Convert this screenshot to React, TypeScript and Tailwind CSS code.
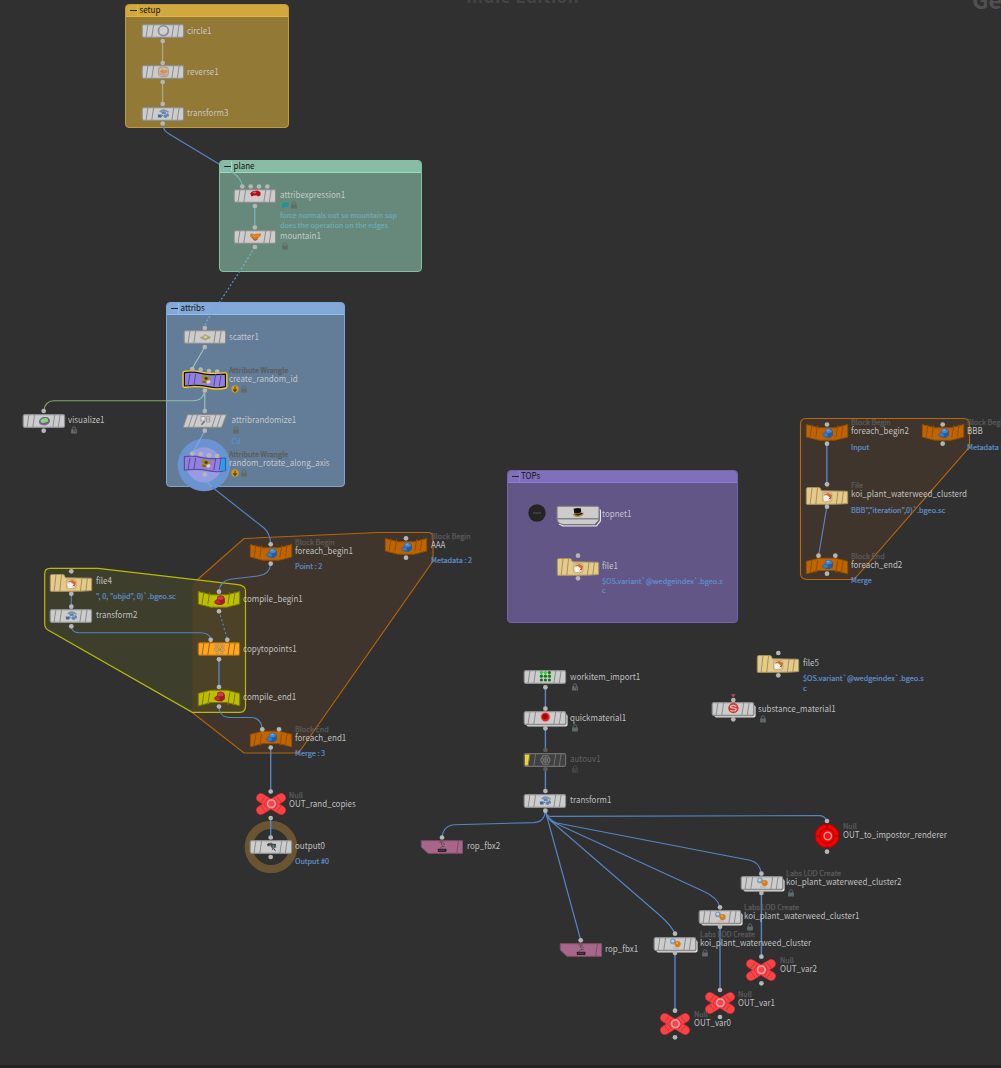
import React from "react";

type Pt = [number, number];
type Kind = "rect" | "wave" | "slant" | "folder" | "begin" | "end" | "null" | "rop" | "target" | "net";

interface NodeSpec {
  x: number;
  y: number;
  kind?: Kind;
  fill?: string;
  edge?: string;
  icon?: string;
  stacked?: boolean;
  selected?: boolean;
  flag?: "right" | "left";
  label: string;
  lx: number;
  ly?: number;
  type?: string;
  info?: string;
  infoDy?: number;
  badges?: string[];
  bx?: number;
  bdy?: number;
  dim?: boolean;
}

const GREY = "#cccccc";
const ORANGE = "#c06400";
const OLIVE = "#bcbe00";
const TAN = "#e5cb8b";
const PURPLE = "#9180dd";

const nodes: NodeSpec[] = [
  { x: 162.5, y: 31.3, icon: "circle", label: "circle1", lx: 187, ly: 31 },
  { x: 162.5, y: 72.3, icon: "reverse", label: "reverse1", lx: 187, ly: 72 },
  { x: 162.5, y: 113.5, icon: "xform", label: "transform3", lx: 187, ly: 113 },
  { x: 254.8, y: 196.2, icon: "expr", label: "attribexpression1", lx: 280, ly: 195, badges: ["chat", "lock"], bx: 285, bdy: 9 },
  { x: 254.8, y: 237.2, icon: "mountain", label: "mountain1", lx: 280, ly: 236, badges: ["lock"], bx: 285, bdy: 9 },
  { x: 204.6, y: 337.3, icon: "scatter", label: "scatter1", lx: 229, ly: 337 },
  { x: 204.6, y: 380.3, kind: "wave", fill: PURPLE, edge: "#10101c", selected: true, icon: "wrangle", label: "create_random_id", lx: 229, ly: 379, type: "Attribute Wrangle", badges: ["warn", "lock"], bx: 235, bdy: 9 },
  { x: 204.6, y: 420.5, kind: "slant", icon: "random", label: "attribrandomize1", lx: 231.5, ly: 420, badges: ["lock"], bx: 236, bdy: 9, info: "Cd", infoDy: 20.5 },
  { x: 204.6, y: 464.3, kind: "wave", fill: PURPLE, edge: "#5c4ba0", flag: "right", icon: "wrangle", label: "random_rotate_along_axis", lx: 229, ly: 463, type: "Attribute Wrangle", badges: ["warn", "lock"], bx: 235, bdy: 9 },
  { x: 43.5, y: 420.7, icon: "visualize", label: "visualize1", lx: 68, ly: 420, badges: ["key"], bx: 74, bdy: 9 },
  { x: 71, y: 582.6, kind: "folder", fill: TAN, icon: "file", label: "file4", lx: 96, ly: 581, info: '", 0, "objid", 0)`.bgeo.sc', infoDy: 15 },
  { x: 71, y: 616, icon: "xform", label: "transform2", lx: 96, ly: 615 },
  { x: 270.5, y: 551.8, kind: "begin", fill: ORANGE, icon: "blueblock", label: "foreach_begin1", lx: 295, ly: 551, type: "Block Begin", info: "Point : 2", infoDy: 15 },
  { x: 406, y: 545.6, kind: "begin", fill: ORANGE, icon: "blueblock", label: "AAA", lx: 431, ly: 545, type: "Block Begin", info: "Metadata : 2", infoDy: 15 },
  { x: 218.7, y: 599.2, kind: "begin", fill: OLIVE, icon: "redblock", label: "compile_begin1", lx: 243, ly: 599 },
  { x: 218.7, y: 649.3, fill: "#ffa51f", icon: "copy", label: "copytopoints1", lx: 243, ly: 649 },
  { x: 218.7, y: 698, kind: "end", fill: OLIVE, icon: "redblock", label: "compile_end1", lx: 243, ly: 697 },
  { x: 270.5, y: 739, kind: "end", fill: ORANGE, icon: "blueblock", label: "foreach_end1", lx: 295, ly: 738, type: "Block End", info: "Merge : 3", infoDy: 14.5 },
  { x: 270.7, y: 804.3, kind: "null", label: "OUT_rand_copies", lx: 289, ly: 804, type: "Null" },
  { x: 270.5, y: 846.7, icon: "output", label: "output0", lx: 295, ly: 846, info: "Output #0", infoDy: 14.5 },
  { x: 578, y: 516, kind: "net", icon: "hat", label: "topnet1", lx: 602, ly: 514 },
  { x: 577.8, y: 567.2, kind: "folder", fill: TAN, icon: "file", label: "file1", lx: 602, ly: 566, info: "$OS.variant`@wedgeindex`.bgeo.s", infoDy: 14.5 },
  { x: 826.7, y: 432, kind: "begin", fill: ORANGE, icon: "blueblock", label: "foreach_begin2", lx: 851, ly: 431, type: "Block Begin", info: "Input", infoDy: 15.5 },
  { x: 942.5, y: 432, kind: "begin", fill: ORANGE, icon: "blueblock", label: "BBB", lx: 967, ly: 431, type: "Block Begin", info: "Metadata : 3", infoDy: 15.5 },
  { x: 826.7, y: 495.8, kind: "folder", fill: TAN, icon: "file", label: "koi_plant_waterweed_clusterd", lx: 851, ly: 494, type: "File", info: 'BBB","iteration",0)`.bgeo.sc', infoDy: 15.5 },
  { x: 826.7, y: 566, kind: "end", fill: ORANGE, icon: "blueblock", label: "foreach_end2", lx: 851, ly: 565, type: "Block End", info: "Merge", infoDy: 14.5 },
  { x: 545.3, y: 677.3, icon: "workitem", label: "workitem_import1", lx: 570, ly: 677, badges: ["key"], bx: 575, bdy: 9 },
  { x: 545.3, y: 718.4, stacked: true, icon: "material", label: "quickmaterial1", lx: 570, ly: 718, badges: ["lockd"], bx: 575, bdy: 9 },
  { x: 545.3, y: 759.5, fill: "#404040", edge: "#707070", flag: "left", icon: "uv", label: "autouv1", lx: 570, ly: 759, badges: ["keydim"], bx: 575, bdy: 9, dim: true },
  { x: 545.3, y: 800.6, icon: "xform", label: "transform1", lx: 570, ly: 800 },
  { x: 442, y: 847, kind: "rop", icon: "fbx", label: "rop_fbx2", lx: 467, ly: 846 },
  { x: 580.7, y: 950, kind: "rop", icon: "fbx", label: "rop_fbx1", lx: 605, ly: 949 },
  { x: 778.3, y: 664.4, kind: "folder", fill: TAN, icon: "file", label: "file5", lx: 803, ly: 663, info: "$OS.variant`@wedgeindex`.bgeo.s", infoDy: 14.5 },
  { x: 733.3, y: 709.3, stacked: true, icon: "substance", label: "substance_material1", lx: 758, ly: 709, badges: ["lockd"], bx: 763, bdy: 9 },
  { x: 826.7, y: 836, kind: "target", label: "OUT_to_impostor_renderer", lx: 843, ly: 835, type: "Null" },
  { x: 761.5, y: 883.3, stacked: true, icon: "lod", label: "koi_plant_waterweed_cluster2", lx: 786, ly: 882, type: "Labs LOD Create", badges: ["lockd"], bx: 791, bdy: 10 },
  { x: 720, y: 917.1, stacked: true, icon: "lod", label: "koi_plant_waterweed_cluster1", lx: 744, ly: 916, type: "Labs LOD Create", badges: ["lockd"], bx: 750, bdy: 10 },
  { x: 675, y: 943.6, stacked: true, icon: "lod", label: "koi_plant_waterweed_cluster", lx: 700, ly: 943, type: "Labs LOD Create", badges: ["lockd"], bx: 705, bdy: 9.5 },
  { x: 761.3, y: 969.5, kind: "null", label: "OUT_var2", lx: 780, ly: 969, type: "Null" },
  { x: 720, y: 1003.2, kind: "null", label: "OUT_var1", lx: 738, ly: 1003, type: "Null" },
  { x: 675, y: 1023.6, kind: "null", label: "OUT_var0", lx: 694, ly: 1023, type: "Null" },
];

const ports: Pt[] = [
  [162.7, 41], [162.7, 63], [162.7, 82], [162.7, 104], [162.7, 123.5],
  [242.3, 186.5], [250.7, 186.5], [259, 186.5], [267.3, 186.5], [254.9, 206], [254.9, 227.5], [254.9, 247],
  [204.8, 328], [204.8, 347], [192.3, 369], [200.7, 369.7], [209, 371], [217.2, 371.5], [204.8, 390.5],
  [204.8, 411], [204.8, 430.7], [192.3, 453.5], [200.7, 454], [209, 455.3], [217.2, 456], [204.8, 474.5],
  [43.7, 411], [43.7, 430.7],
  [71.3, 571.3], [71.3, 593.8], [71.3, 606.7], [71.3, 626.3],
  [270.7, 544.3], [270.7, 563.7], [406, 538.3], [406, 557.7],
  [219, 591.7], [219, 611.3], [210.7, 639.8], [227.3, 639.8], [219, 659.3], [219, 687], [219, 706.5],
  [262.3, 729.3], [279, 729.3], [270.7, 747.5], [270.7, 791.5], [270.7, 818], [270.7, 837.5], [270.7, 857],
  [578, 555.7], [578, 578.3],
  [827, 424.5], [827, 443.7], [942.7, 424.5], [942.7, 443.7], [827, 484.3], [827, 506.7], [818.5, 555.7], [835.3, 555.7], [827, 573.7],
  [545.4, 687.3], [545.4, 708.7], [545.4, 728.3], [545.4, 791], [545.4, 810.7],
  [442, 837.5], [580.7, 940.3], [778.3, 653], [778.3, 675.3], [733.3, 700], [733.3, 719.3],
  [827, 821], [827, 851.7], [761.4, 873.7], [761.4, 893], [720, 907.3], [720, 926.7], [675, 933.7], [675, 953],
  [761.4, 956.7], [761.4, 983.3], [720, 990], [720, 1017], [675, 1010.7], [675, 1037.3],
];

function Wires() {
  return (
    <svg className="absolute left-0 top-0" width="1001" height="1068" fill="none" stroke="#5685c3" strokeWidth="1.15">
      <g stroke="#aba77e" strokeWidth="1.4">
        <path d="M162.6 41V63M162.6 82V104" />
      </g>
      <path d="M162.7 124C163 130 166 132 170 134.5L219 164" />
      <path d="M219 164L230 171C238 176 241 179 242.3 186" stroke="#7ab9bd" />
      <path d="M254.8 206V227" stroke="#6fb2c0" strokeWidth="1.4" />
      <path d="M254.8 247L240 271" stroke="#7ab9c5" strokeDasharray="2 2" />
      <path d="M240 271L219 303" stroke="#6793cf" strokeDasharray="2 2" />
      <path d="M219 303L208 319Q205 324 204.8 328" stroke="#73a5e4" strokeDasharray="2 2" />
      <path d="M204.8 347L192.5 368M204.8 390V411" stroke="#9ac5c0" />
      <path d="M204.8 390C204 397 200 400.7 193 400.7H166.5" stroke="#93bdac" />
      <path d="M166.5 400.7H54C48 400.7 44.5 405 43.7 411" stroke="#89a764" />
      <path d="M204.8 431L192.5 453M204.8 475Q206 483 212 487" stroke="#77a9e4" />
      <path d="M212 487L264 528Q270 533 270.7 544" />
      <path d="M270.7 564C270 571 266 575 258 576L230 579.3C223 580.5 220 584 219 591" />
      <path d="M219 611L227.3 639" strokeDasharray="2 2.4" />
      <path d="M71.3 594V607M71.3 626C71.5 630 74 632.7 79 632.7H200C207 632.7 210 635 210.7 639" />
      <path d="M219 706C219 713 223 717.5 230 717.5H251C258 717.5 261.5 721 262.3 729" />
      <path d="M219 659V687M270.7 748V791M270.7 818V837M826.8 444V484" strokeWidth="1.4" />
      <path d="M826.8 507L818.7 555" />
      <path d="M545.4 687V709M545.4 728V750M545.4 769V791" strokeWidth="1.4" />
      <path d="M545.4 811C544.5 820 540 822.3 534 822.6L455 824.7C447 825 443 829 442 837" />
      <path d="M545.4 811L580.7 940" />
      <path d="M545.4 811Q546 817 551 821L660 915.5Q672 926 675 934" />
      <path d="M545.4 811Q547 819 555 823L704 891.5Q718 898 720 907" />
      <path d="M545.4 811Q548 820 557 823L750 860.3Q759 862 761.4 873" />
      <path d="M545.4 811Q546 816 550 816.3L820 815.6Q825 816 827 821" />
      <path d="M675 953V1011M720 927V990M761.4 893V957" strokeWidth="1.4" />
    </svg>
  );
}

function Hulls() {
  return (
    <svg className="absolute left-0 top-0" width="1001" height="1068" fill="none">
      <path d="M192.3 712.5V586L197 580 244 538.5 378 532.5H428Q433 532.5 433 537V561L302 748Q299 753 295 753H244Z" fill="#3f352c" />
      <path d="M192.3 712.5L244 753H295Q299 753 302 748L433 561V537Q433 532.5 428 532.5H378L244 538.5 197 580" stroke="#b76508" strokeWidth="1.1" />
      <path
        d="M50 568.3H98L238 584.7Q245.5 585.5 245.5 591V706Q245.5 712.3 240 712.3H192.3L48 630Q44.7 628 44.7 624V574Q44.7 568.3 50 568.3Z"
        fill="#b8bc08"
        fillOpacity="0.1"
        stroke="#b8bb08"
        strokeWidth="1.2"
      />
      <path
        d="M806 418.5H963Q969.5 418.5 969.5 424V447L858 575Q854 579.5 851 579.5H807Q800.5 579.5 800.5 573V424Q800.5 418.5 806 418.5Z"
        fill="#3f352c"
        stroke="#bd6808"
        strokeWidth="1.1"
      />
    </svg>
  );
}

function Icon({ name }: { name?: string }) {
  switch (name) {
    case "circle":
      return <circle r="4.9" cy="-0.3" fill="#cfcfcf" stroke="#838b94" strokeWidth="1.6" />;
    case "reverse":
      return (
        <g>
          <rect x="-5" y="-5" width="10" height="9.6" rx="3" fill="#c9b9a8" stroke="#a0907f" strokeWidth="0.8" />
          <path d="M-4-.6L-.5-3 0-1.5 4-2 3.6 1.3 1 .7.8 2.4Z" fill="#d98d45" />
          <path d="M-4 1Q-1 4.5 3 2.6" stroke="#a49a90" fill="none" />
        </g>
      );
    case "xform":
      return (
        <g fill="none">
          <path d="M-3.6-2.2Q-.4-5 2.6-3.2L5.2-1.6" stroke="#7c93ad" strokeWidth="1.7" />
          <path d="M-2.6-2.4L1.6-2.8 3-.6-1 .2Z" fill="#5b82b3" />
          <path d="M-5.6.6H-1.8V3.4H-5.4Z" fill="#3f6ba3" />
          <path d="M.6.4L5 .2 5.6 2.6H3.6L3 4.2.8 3.4Z" fill="#5c84b6" />
          <path d="M-1.6.8L.4 2.4M3.4-.4L5.2.4" stroke="#42597a" strokeWidth="0.8" />
        </g>
      );
    case "expr":
      return (
        <g>
          <path d="M-4.4-.2L-1 4.8H1.4L4 .8 0-.6Z" fill="#e3c6cb" />
          <path d="M-5.2-2.4L-3.4-4.6 2-5.4 5-4 5.2-.8 2.6.6 1.6-.6-1.4-.6-3.8.6Z" fill="#b30d18" />
          <path d="M-3-3.6L0-4.4 1.4-3-1.4-2.4Z" fill="#d86a70" />
        </g>
      );
    case "mountain":
      return (
        <g>
          <path d="M-5.3-3L-3-3.8-1-2.6 1-3.4 3-3 5.2-4 5.4-1.4 3.2.8 1 3.6-1.2 3.4-3.4.8-5 .2Z" fill="#d27a22" />
          <path d="M-3-2.6L-1 0 1-2 3-.5" stroke="#e89c48" fill="none" />
          <path d="M-3 1.2L-.4 3.4 2.4 1.6" stroke="#9c6128" fill="none" />
        </g>
      );
    case "scatter":
      return (
        <g>
          <path d="M-5.3.3L-2.4-1 0-3 2.4-1.2 5.3 0 2.4 1.6 0 2.8-2.6 1.6Z" fill="#aaa373" />
          <path d="M-2 0L0-1.4 2 .2 0 1.5Z" fill="#d8d3a6" />
          <path d="M-5.3.6L0 3.1 5.3.4" fill="none" stroke="#88845e" strokeWidth="0.6" />
        </g>
      );
    case "wrangle":
      return (
        <g>
          <path d="M-4.5-4L-1-4.8.8-3 4.5-3.4 4.8-.8 1.3.4.2 3-4.6 2.6-4.2.4-1.8-.4-4.5-2Z" fill="#a88b13" />
          <circle cx="0.3" cy="-1.7" r="1.6" fill="#4b4015" />
          <path d="M-3.2 2H0" stroke="#4e4015" />
          <path d="M.4 1.2L3.6 0 5 2.3 2 4Z" fill="#d9d4c4" />
        </g>
      );
    case "random":
      return (
        <g fill="none" stroke="#939393" strokeWidth="0.8">
          <rect x="-4" y="-4.6" width="4" height="4.6" fill="#e2e2e2" />
          <path d="M1.4-4.3H4.8V1H1.4ZM1.4-1.8H4.8" />
          <path d="M-3.6 3.8L-.4.4" stroke="#777" strokeWidth="1.6" />
        </g>
      );
    case "visualize":
      return (
        <g transform="rotate(-12)">
          <ellipse rx="5.6" ry="3.9" cy="0.6" fill="#9a69a4" />
          <ellipse rx="5.3" ry="3.7" cy="-0.3" fill="#5f6a76" />
          <ellipse rx="3.9" ry="2.3" cy="-0.5" fill="#8fd07d" />
        </g>
      );
    case "file":
      return (
        <g>
          <rect x="-5" y="-4.5" width="9.6" height="9.3" rx="1.6" fill="#dcc399" stroke="#b99b66" strokeWidth="0.6" />
          <path d="M-3.5-2.6L1-4 4.8-1.8 3.4 2.2.4-.6Z" fill="#cf6f30" />
          <path d="M-4.2-.2L-.8-1.9 2.4.6 2 3.6-3 4.3Z" fill="#f4efe8" />
          <path d="M1.4 2L3.6.4" stroke="#8a5a3c" />
        </g>
      );
    case "blueblock":
      return (
        <g>
          <path d="M-5.4.8L-2.6-1.2-2.2-3.8.6-5 3.8-4.2 5.3-2 5.2 2 2.2 4.4-1.6 4.2-5 2.8Z" fill="#245c9e" />
          <path d="M-2-3.6L.8-4.7 3.5-3.8 4.4-1.6 1-.2-2-.9Z" fill="#4188d2" />
          <path d="M-4.9 1L-2-.8.2.4-.2 3.5-4.6 2.4Z" fill="#3879c1" />
          <path d="M-1.2-3.4L.8-4 2.1-3.4.2-2.6Z" fill="#7fb2e6" />
        </g>
      );
    case "redblock":
      return (
        <g>
          <path d="M-5.4.8L-2.6-1.4-2.2-4.2.4-5.2 3.6-4.6 5.2-2 5.2 2.2 2.2 4.6-1.6 4.4-5 3Z" fill="#9e1b25" />
          <path d="M-2-3.8L.6-4.6 3.3-4 4-1.4 1-.4-2-1Z" fill="#cf3b47" />
          <path d="M-4.7 1L-2-.8.2.6-.2 3.4-4.4 2.6Z" fill="#bb2e39" />
        </g>
      );
    case "copy":
      return (
        <g>
          {[[-3.3, -3.2], [0, -4.2], [3.4, -3], [-4, 0.4], [3.9, 0.6], [-2.2, 3.6], [2.3, 3.7], [0, 0]].map(([cx, cy]) => (
            <circle key={`${cx},${cy}`} cx={cx} cy={cy} r="1.3" fill="#e5ab5e" stroke="#a98550" strokeWidth="0.7" />
          ))}
          <path d="M-3-2.6L3 3M3-2.4L-2.2 3" stroke="#ab8a55" strokeWidth="0.9" />
        </g>
      );
    case "output":
      return (
        <g fill="none">
          <path d="M-4.6-2.2L-3-4 0-4.4 1.4-3.2 4.4-3.2 5 .2 3 1 .6.4-2-1.2-4.2-.6Z" fill="#6d7376" />
          <path d="M-2.6-4V-.8M.4-3.6V.4M3.4-3V.6M-4 -2.4H4.6" stroke="#3b4144" strokeWidth="0.9" />
          <path d="M.4.6L2.6 1.4 4 4.2M1 1.4L1.4 3" stroke="#44494b" />
        </g>
      );
    case "workitem":
      return (
        <g>
          {[-4, 0, 4].map((cx) =>
            [-4.4, -0.8, 3].map((cy) => (
              <circle key={`${cx},${cy}`} cx={cx} cy={cy} r="1.6" fill={cy < -3 && cx < 3 ? "#22d82a" : "#16731c"} />
            )),
          )}
        </g>
      );
    case "material":
      return (
        <g>
          <circle r="5.2" cy="-1" fill="#e3a0a0" />
          <circle r="4.2" cy="-1" fill="#d0262a" />
          <circle r="2.6" cx="-0.3" cy="-1.4" fill="#ad0208" />
        </g>
      );
    case "uv":
      return (
        <g fill="none" stroke="#767676" strokeWidth="1.1">
          <path d="M-2.4-4.2H2.4L4.8 0 2.4 4.2H-2.4L-4.8 0Z" />
          <circle r="2.2" />
          <path d="M-4-2.6L4 2.6M4-2.6L-4 2.6M0-4V4" strokeWidth="0.6" />
        </g>
      );
    case "fbx":
      return (
        <g>
          <path d="M-2.6-5H1.8M-1-4.5L.4-1.6M-2 1.5L0-.6 2.6-.2M1.6-3.6L2.5-2" stroke="#5d4752" fill="none" />
          <rect x="-4.2" y="1.7" width="8.6" height="3.2" rx="0.6" fill="#2b2026" />
          <path d="M-2.8 3.3H2.8" stroke="#76656d" strokeWidth="0.8" strokeDasharray="1.4 0.6" />
        </g>
      );
    case "substance":
      return (
        <g>
          <circle r="5.1" cy="-0.8" fill="#d43235" />
          <path d="M3-2.6Q.6-4.2-1.6-3.4T-2.4-1.4L2.6-.4Q3.4 1.2 1.2 1.8T-3 1.2" fill="none" stroke="#e3c3c3" strokeWidth="1.2" />
        </g>
      );
    case "lod":
      return (
        <g>
          <rect x="-2.5" y="3.4" width="6" height="1.2" fill="#b4b4b4" />
          <circle r="2.9" cx="-2.4" cy="-2.6" fill="#7c99b6" />
          <circle r="1.5" cx="-2.7" cy="-3" fill="#bfd4e6" />
          <circle r="3.1" cx="2.2" cy="0" fill="#d97c14" />
          <circle r="1" cx="1.7" cy="-0.8" fill="#f0ac54" />
        </g>
      );
    case "hat":
      return (
        <g>
          <path d="M-5.2.6Q-4 4.2 1 3.4 5.4 2.6 5.8-.4L3.4-.6-4 .6Z" fill="#a98a45" />
          <path d="M-4.4-4.6Q0-6.2 3-4.8L3.2-.4Q4.4-.2 5.4-.6 3.4 1.8 0 2-3 2.2-3.6.2Z" fill="#15120e" />
          <path d="M-3.4.2Q0 1.2 3.2-.8" stroke="#a07c22" fill="none" />
        </g>
      );
    default:
      return null;
  }
}

function Stripes({ tone, bend = 0 }: { tone: string; bend?: number }) {
  const bars: Pt[] = [[-16, 0.75], [-10.3, 0.45], [9.8, 0.45], [15.2, 0.75]];
  return (
    <g stroke={tone} strokeWidth="1">
      {bars.map(([bx, k]) => (
        <line key={bx} x1={bx + 0.9} y1={-6 - bend * k} x2={bx - 0.9} y2={6 - bend * k} />
      ))}
    </g>
  );
}

function edgeFor(fill: string) {
  if (fill === GREY) return "#8d8d8d";
  if (fill === TAN) return "#a68f59";
  if (fill === ORANGE) return "#964e00";
  if (fill === OLIVE) return "#7c7e00";
  return "#a3670d";
}

function Shape({ node }: { node: NodeSpec }) {
  const { kind = "rect", fill = GREY } = node;
  const edge = node.edge ?? edgeFor(fill);
  if (kind === "null")
    return (
      <g>
        <g strokeLinecap="round" strokeWidth="9.6" stroke="#b02a2c">
          <path d="M-10.2-6.2L10.2 6.2M10.2-6.2L-10.2 6.2" />
        </g>
        <g strokeLinecap="round" strokeWidth="8.2" stroke="#fb4347">
          <path d="M-10.2-6.2L10.2 6.2M10.2-6.2L-10.2 6.2" />
        </g>
        <path d="M-10.5-1.4L-6-7.2M-7-.2L-3-5.5M10.5-1.4L6-7.2M7-.2L3-5.5M-10.5 1.4L-6 7.2M-7 .2L-3 5.5M10.5 1.4L6 7.2M7 .2L3 5.5" stroke="#b9292d" strokeWidth="0.7" />
        <circle r="3.8" cx="0.4" cy="-0.2" fill="#f0484c" stroke="#e6a0a3" strokeWidth="1.5" />
      </g>
    );
  if (kind === "target")
    return (
      <g>
        <circle r="11.8" fill="#f80000" stroke="#b40000" strokeWidth="0.9" />
        <path d="M-11.6 0H-7.4M11.6 0H7.4M0-11.6V-7.4M0 11.6V7.4" stroke="#9b0000" />
        <circle r="7.4" fill="none" stroke="#9b0000" strokeWidth="0.9" />
        <circle r="3.7" cx="0.8" cy="0" fill="#f30c0c" stroke="#ea9a9a" strokeWidth="1.5" />
      </g>
    );
  if (kind === "rop")
    return (
      <g>
        <path d="M-20.7-6.3H20.5V6.3H-14L-20.7 0Z" fill="#a8678a" stroke="#81506a" strokeWidth="1" />
        <path d="M16.4-6L14.8 6" stroke="#7d4c65" />
        <Icon name={node.icon} />
      </g>
    );
  if (kind === "net")
    return (
      <g>
        <path d="M21.6-6.5Q22.4-6 22.4-5V5L18.4 9.9H-15L-19 8" fill="none" stroke="#e6e6e6" strokeWidth="1.2" />
        <path d="M-21-8.5Q-21-9.8-19-9.8H19Q21-9.8 21-8.5V4L16.5 8.6H-15Q-21 7-21 3Z" fill={GREY} stroke="#777" />
        <path d="M-21 2.8H21" stroke="#858585" strokeWidth="1.4" />
        <g transform="translate(0 -2.6)">
          <Icon name={node.icon} />
        </g>
      </g>
    );
  if (kind === "begin" || kind === "end") {
    const flip = kind === "end" ? -1 : 1;
    const d =
      flip === 1
        ? "M-20.7-7.4L-8-4.2H8L20.7-7.4V5L8 8.2H-8L-20.7 5Z"
        : "M-20.7 7.8L-8 4.6H8L20.7 7.8V-4.6L8-7.8H-8L-20.7-4.6Z";
    return (
      <g>
        <path d={d} fill={fill} stroke={edge} strokeWidth="1" strokeLinejoin="round" />
        <Stripes tone={edge} bend={flip * 1.6} />
        <g transform={`translate(0.7 ${flip === 1 ? 1.5 : -1.2})`}>
          <Icon name={node.icon} />
        </g>
      </g>
    );
  }
  if (kind === "wave") {
    const d = "M-20.6-7.3Q-12-8.6-4-6.6T20.5-5.8V6.7Q12 8.8 3 6.6T-20.6 6Z";
    return (
      <g>
        {node.selected && <path d={d} fill="none" stroke="#ffd21a" strokeWidth="4" strokeLinejoin="round" />}
        <path d={d} fill={fill} stroke={edge} strokeWidth="1.2" />
        <Stripes tone="#5a489f" />
        {node.flag === "right" && <path d="M17-5.6L20-5.2V6.4L15.6 7Z" fill="#00aef4" />}
        <g transform="translate(0.8 0)">
          <Icon name={node.icon} />
        </g>
      </g>
    );
  }
  if (kind === "slant")
    return (
      <g>
        <path d="M-17.5-6.3H21.4L16.6 6.3H-21.8Z" fill={GREY} stroke="#8d8d8d" strokeWidth="1" strokeLinejoin="round" />
        <path d="M-12.5-6L-16.5 6M-7.5-6L-11.5 6M11-6L7 6M16-6L12 6" stroke="#8d8d8d" />
        <Icon name={node.icon} />
      </g>
    );
  if (kind === "folder")
    return (
      <g>
        <path d="M-20.7-7Q-20.7-8.5-19-8.5H-8Q-6.5-8.5-5.6-5.2L19.5-4.8Q20.7-4.8 20.7-4V7.4Q20.7 8.2-19.7 8.4Q-20.7 8.4-20.7 7.4Z" fill={fill} stroke={edge} strokeWidth="1" />
        <path d="M-15-8.2L-16.8 8M-9.5-8.2L-11.2 8M11-4.6L9.4 8M16.4-4.6L14.8 8" stroke={edge} />
        <g transform="translate(0.4 1)">
          <Icon name={node.icon} />
        </g>
      </g>
    );
  return (
    <g>
      {node.stacked && (
        <g>
          <rect x="-18.6" y="-3.8" width="41.2" height="12.4" rx="2" fill="#e0e0e0" />
          <rect x="-19.6" y="-5" width="41" height="12.3" rx="1.8" fill="#7d7d7d" />
        </g>
      )}
      <rect x="-20.8" y="-6.4" width="41.4" height="12.8" rx="1.6" fill={fill} stroke={edge} strokeWidth="1.1" />
      {node.flag === "left" && <path d="M-20-5.6H-15L-16.6 5.6H-20Z" fill="#f2d420" />}
      <Stripes tone={edge} />
      <g transform="translate(0.4 0)">
        <Icon name={node.icon} />
      </g>
    </g>
  );
}

function Badge({ name }: { name: string }) {
  if (name === "chat")
    return <path d="M-3.4.4Q-3-2.6.8-2.8 4-2.6 3.6-.3 3 2.4-.4 2.3L-3.8 3.2-2.4 1.8Z" fill="#179797" />;
  if (name === "warn")
    return (
      <g>
        <circle r="3.7" fill="#cf9c20" />
        <path d="M0-2.6V2.4M-1.8.4L0 2.4 1.8.4" stroke="#54420f" strokeWidth="1.1" fill="none" />
      </g>
    );
  const tone = name === "keydim" ? "#494949" : name === "key" ? "#6b6b6b" : name === "lockd" ? "#5d6b68" : "#5f6c69";
  return (
    <g>
      <path d="M-1.7 0V-1.5Q-1.7-3.2 0-3.2T1.7-1.5V0" fill="none" stroke={tone} strokeWidth="0.9" />
      <rect x="-2.9" y="-0.6" width="5.8" height="4" rx="0.3" fill={tone} />
      {name.startsWith("key") && <path d="M-1 .8H1.6V2.6" fill="none" stroke="#303030" strokeWidth="0.7" />}
    </g>
  );
}

function Text({ x, y, className, children }: { x: number; y: number; className: string; children: React.ReactNode }) {
  return (
    <span className={`absolute -translate-y-1/2 whitespace-pre ${className}`} style={{ left: x, top: y }}>
      {children}
    </span>
  );
}

const NAME = "scale-y-[1.12] text-[8px] leading-[12px] text-[#d2d2d2e6]";
const NAME_DIM = "scale-y-[1.12] text-[8px] leading-[12px] text-[#606060]";
const TYPE = "text-[7.25px] leading-[10px] text-[#5b5b5b] [-webkit-text-stroke:0.25px_#5b5b5b]";
const INFO = "text-[7.3px] leading-[10px] text-[#6090cf] [-webkit-text-stroke:0.2px_#6090cf]";
const COMMENT = "text-[7.23px] leading-[10px] text-[#6cadb2] [-webkit-text-stroke:0.2px_#6cadb2]";

function GraphNode({ node }: { node: NodeSpec }) {
  const ly = node.ly ?? node.y;
  return (
    <div>
      <svg className="absolute" style={{ left: node.x - 30, top: node.y - 20 }} width="60" height="40" viewBox="-30 -20 60 40">
        <Shape node={node} />
      </svg>
      {node.type && <Text x={node.lx} y={ly - 9} className={TYPE}>{node.type}</Text>}
      <Text x={node.lx} y={ly} className={node.dim ? NAME_DIM : NAME}>{node.label}</Text>
      {node.info && <Text x={node.lx} y={ly + (node.infoDy ?? 15)} className={INFO}>{node.info}</Text>}
      {node.badges?.map((b, i) => (
        <svg key={b} className="absolute" style={{ left: (node.bx ?? 0) + i * 9 - 5, top: ly + (node.bdy ?? 9) - 4.3 }} width="10" height="10" viewBox="-5 -5 10 10">
          <Badge name={b} />
        </svg>
      ))}
    </div>
  );
}

function NetworkBox({ title, frame, header, divider }: { title: string; frame: string; header: string; divider: string }) {
  return (
    <section className={`absolute flex flex-col overflow-hidden rounded-[4px] border ${frame}`}>
      <header className={`flex h-[12px] shrink-0 items-center border-b text-[8px] leading-[12px] text-[#141414] ${header}`}>
        <span className={`flex h-full w-[12px] items-center justify-end border-r ${divider}`}>
          <span className="h-[1.5px] w-[7px] bg-[#262626]" />
        </span>
        <span className="-mt-px scale-y-[1.12] pl-[1.5px]">{title}</span>
      </header>
    </section>
  );
}

export default function App() {
  return (
    <main className="relative h-[1068px] w-[1001px] overflow-hidden bg-[#303030] font-['Noto_Sans_CJK_SC',sans-serif]">
      <span className="absolute left-[466px] top-[-14px] whitespace-pre text-[17px] font-bold leading-[20px] tracking-[0.5px] text-[#444444]">Indie Edition</span>
      <span className="absolute left-[972px] top-[-14px] whitespace-pre text-[23px] font-bold leading-[26px] text-[#505050]">Geometry</span>

      <NetworkBox title="setup" frame="left-[125px] top-[4px] h-[124px] w-[164px] border-[#c19b3a] bg-[#927936]" header="border-[#e6b63d] bg-[#d0a83e]" divider="border-[#e6b63d]" />
      <NetworkBox title="plane" frame="left-[219px] top-[160px] h-[112px] w-[203px] border-[#88bda5] bg-[#67897b]" header="border-[#98dcbc] bg-[#89bca5]" divider="border-[#98dcbc]" />
      <NetworkBox title="attribs" frame="left-[166px] top-[302px] h-[185px] w-[179px] border-[#7fa5d6] bg-[#637c97]" header="border-[#90bff5] bg-[#83a9d9]" divider="border-[#90bff5]" />
      <NetworkBox title="TOPs" frame="left-[506.5px] top-[470px] h-[153px] w-[231px] border-[#7562ad] bg-[#615685]" header="border-[#9278e0] bg-[#806fb9]" divider="border-[#9278e0]" />

      <Hulls />

      <svg className="absolute left-[177px] top-[438px]" width="54" height="54" viewBox="-27 -27 54 54">
        <circle r="26.3" fill="#6b93cf" />
        <circle r="17.5" fill="#969be2" />
      </svg>
      <svg className="absolute left-[243.5px] top-[820px]" width="54" height="54" viewBox="-27 -27 54 54">
        <circle r="22.2" fill="none" stroke="#695531" strokeWidth="8.2" />
      </svg>
      <svg className="absolute left-[526.5px] top-[503px]" width="20" height="20" viewBox="-10 -10 20 20">
        <circle r="8.7" fill="#242424" />
        <path d="M-4 0H4" stroke="#3f4a47" strokeWidth="1.4" />
      </svg>

      <Wires />
      {nodes.map((n) => (
        <GraphNode key={n.label} node={n} />
      ))}

      <Text x={280} y={214.7} className={COMMENT}>force normals out so mountain sop</Text>
      <Text x={280} y={224.8} className={COMMENT}>does the operation on the edges</Text>
      <Text x={602} y={590} className={INFO}>c</Text>
      <Text x={803} y={687.5} className={INFO}>c</Text>

      <svg className="absolute left-0 top-0" width="1001" height="1068" fill="#b6b6b6">
        {ports.map(([cx, cy]) => (
          <circle key={`${cx}-${cy}`} cx={cx} cy={cy} r="2.35" />
        ))}
        <circle cx="545.4" cy="750" r="2.3" fill="#5a5a5a" />
        <circle cx="545.4" cy="769.3" r="2.3" fill="#5a5a5a" />
        <path d="M731 694.3H735.6L733.3 697.6Z" fill="#c04a4a" />
      </svg>
      <div className="absolute bottom-0 left-0 h-[3px] w-full bg-[#282426]" />
    </main>
  );
}
